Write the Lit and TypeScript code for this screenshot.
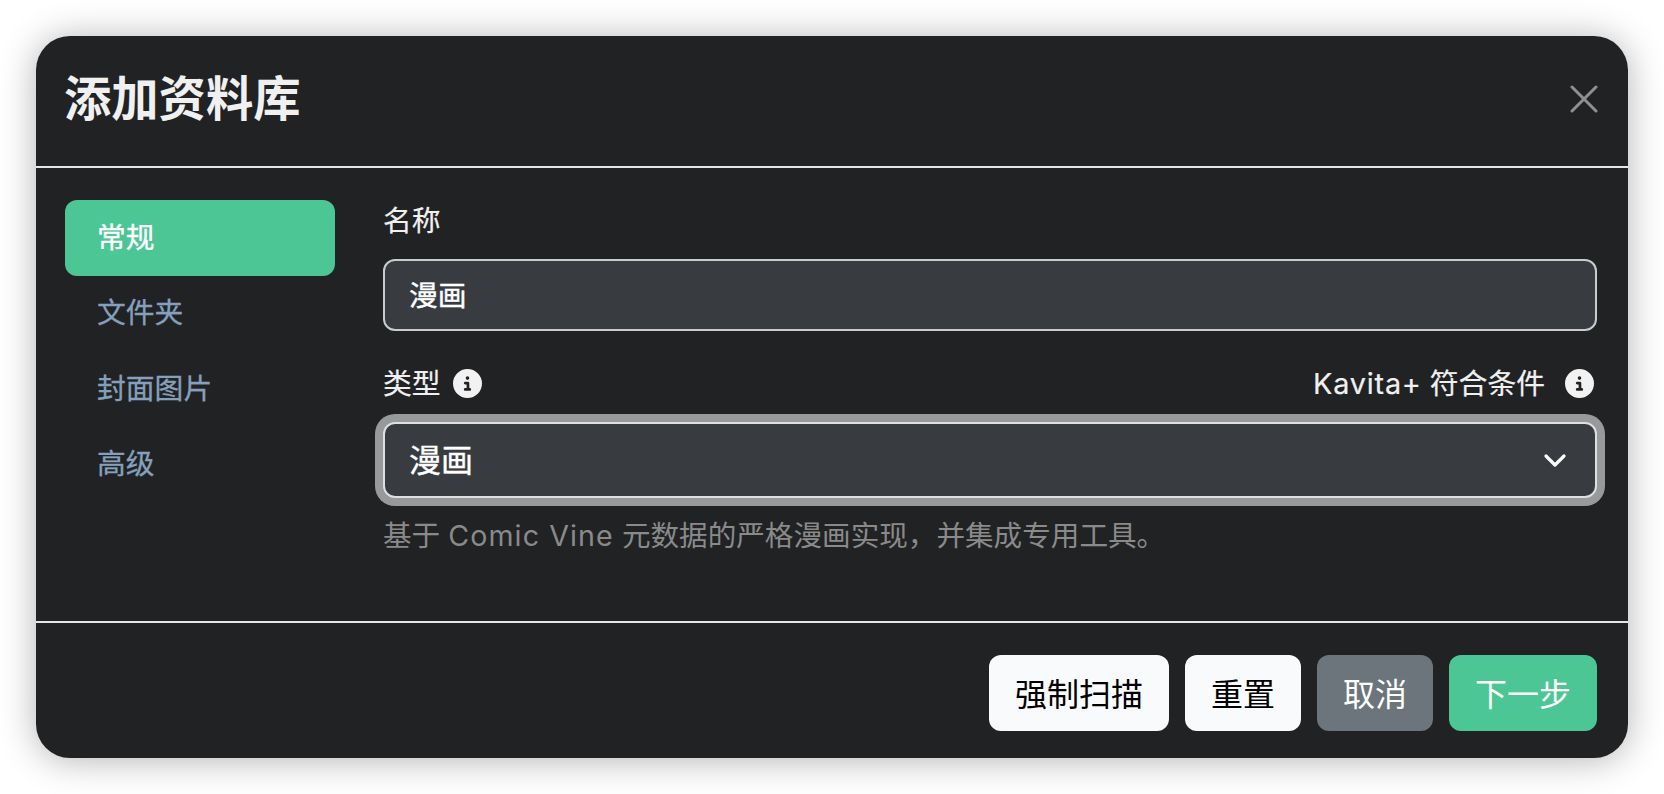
import { LitElement, html, css } from "lit";
import { customElement } from "lit/decorators.js";

const info = html`<svg class="info" viewBox="0 0 512 512"><path fill="currentColor" d="M256 512A256 256 0 1 0 256 0a256 256 0 1 0 0 512zM216 336h24V272H216c-13.300 0-24-10.700-24-24s10.700-24 24-24h48c13.300 0 24 10.700 24 24v88h8c13.300 0 24 10.700 24 24s-10.700 24-24 24H216c-13.300 0-24-10.700-24-24s10.700-24 24-24zm40-208a32 32 0 1 1 0 64 32 32 0 1 1 0-64z"/></svg>`;

@customElement("app-root")
export class AppRoot extends LitElement {
  static styles = css`
    :host {
      display: block;
      width: 1664px;
      height: 794px;
      padding: 36px;
      box-sizing: border-box;
      background: #fff;
      font-family: "Inter", "Noto Sans CJK SC", sans-serif;
      color: #f2f2f2;
    }
    .dialog {
      height: 722px;
      background: #202224;
      border-radius: 34px;
      box-shadow: 0 2px 36px rgba(0, 0, 0, 0.3);
      display: flex;
      flex-direction: column;
      overflow: hidden;
    }
    .header {
      height: 125px;
      flex: none;
      border-bottom: 2px solid #e6e6e6;
      display: flex;
      align-items: center;
      justify-content: space-between;
      padding: 0 30px 5px 28px;
      box-sizing: content-box;
    }
    h1 {
      margin: 0;
      font-size: 47.300px;
      font-weight: 700;
      line-height: 1;
      color: #f0f0f0;
    }
    .close {
      width: 28px;
      height: 28px;
      color: #8f9092;
      display: block;
    }
    .body {
      flex: 1;
      display: flex;
      padding: 32px 31px 0 29px;
      gap: 48px;
      min-height: 0;
    }
    nav {
      width: 270px;
      flex: none;
      display: flex;
      flex-direction: column;
    }
    .tab {
      height: 75.300px;
      box-sizing: border-box;
      padding: 0 0 4px 32px;
      display: flex;
      align-items: center;
      font-size: 28.800px;
      color: #86a0bc;
      -webkit-text-stroke: 0.3px currentColor;
      border-radius: 12px;
    }
    .tab.active {
      background: #4cc694;
      color: #fff;
      height: 76px;
      padding-bottom: 6px;
      margin-bottom: -0.700px;
    }
    main {
      flex: 1;
      min-width: 0;
    }
    .label {
      font-size: 28.800px;
      line-height: 42px;
      color: #f0f0f0;
      -webkit-text-stroke: 0.2px currentColor;
      display: flex;
      align-items: center;
      justify-content: space-between;
    }
    .group {
      display: flex;
      align-items: center;
      gap: 12px;
    }
    .group.right {
      gap: 20px;
      margin-right: 3px;
    }
    .kv {
      letter-spacing: 0.800px;
    }
    .info {
      width: 29px;
      height: 29px;
      color: #f2f2f2;
      display: block;
    }
    .input {
      margin-top: 17px;
      height: 71.500px;
      box-sizing: border-box;
      border: 2px solid #c9cbcc;
      border-radius: 12px;
      background: #383c41;
      display: flex;
      align-items: center;
      padding: 0 0 2px 24px;
      font-size: 28.800px;
      color: #fff;
      -webkit-text-stroke: 0.4px currentColor;
    }
    .type-label {
      margin-top: 32px;
    }
    .select {
      margin-top: 17px;
      height: 76px;
      box-sizing: border-box;
      border: 2px solid #dedfe0;
      border-radius: 12px;
      background: #383c41;
      box-shadow: 0 0 0 8px #98999a;
      display: flex;
      align-items: center;
      justify-content: space-between;
      padding: 0 26px 4px 24px;
      font-size: 32px;
      color: #fff;
      -webkit-text-stroke: 0.4px currentColor;
    }
    .chev {
      width: 28px;
      height: 28px;
      color: #fff;
      display: block;
      margin-top: 4px;
    }
    .help {
      margin-top: 18px;
      font-size: 28.600px;
      line-height: 40px;
      color: #8a8a8a;
    }
    .cv {
      letter-spacing: 1.100px;
    }
    .footer {
      height: 137px;
      flex: none;
      border-top: 2px solid #e6e6e6;
      display: flex;
      align-items: flex-start;
      justify-content: flex-end;
      gap: 16px;
      padding: 32px 31px 0 0;
      box-sizing: border-box;
    }
    .btn {
      height: 76px;
      box-sizing: border-box;
      padding: 0 26px 2px;
      border-radius: 12px;
      display: flex;
      align-items: center;
      font-size: 32px;
    }
    .light {
      background: #f9fafc;
      color: #000;
    }
    .gray {
      background: #6c757b;
      color: #fff;
    }
    .green {
      background: #4cc694;
      color: #fff;
    }
  `;

  render() {
    return html`
      <div class="dialog">
        <div class="header">
          <h1>添加资料库</h1>
          <svg class="close" viewBox="0 0 28 28"><path d="M2 2L26 26M26 2L2 26" stroke="currentColor" stroke-width="3" stroke-linecap="round"/></svg>
        </div>
        <div class="body">
          <nav>
            <div class="tab active">常规</div>
            <div class="tab">文件夹</div>
            <div class="tab">封面图片</div>
            <div class="tab">高级</div>
          </nav>
          <main>
            <div class="label">名称</div>
            <div class="input">漫画</div>
            <div class="label type-label">
              <span class="group">类型 ${info}</span>
              <span class="group right"><span><span class="kv">Kavita+</span> 符合条件</span> ${info}</span>
            </div>
            <div class="select">
              <span>漫画</span>
              <svg class="chev" viewBox="0 0 28 28"><path d="M5 10L14 19L23 10" fill="none" stroke="currentColor" stroke-width="3.200" stroke-linecap="round" stroke-linejoin="round"/></svg>
            </div>
            <div class="help">基于 <span class="cv">Comic Vine</span> 元数据的严格漫画实现，并集成专用工具。</div>
          </main>
        </div>
        <div class="footer">
          <div class="btn light">强制扫描</div>
          <div class="btn light">重置</div>
          <div class="btn gray">取消</div>
          <div class="btn green">下一步</div>
        </div>
      </div>
    `;
  }
}
